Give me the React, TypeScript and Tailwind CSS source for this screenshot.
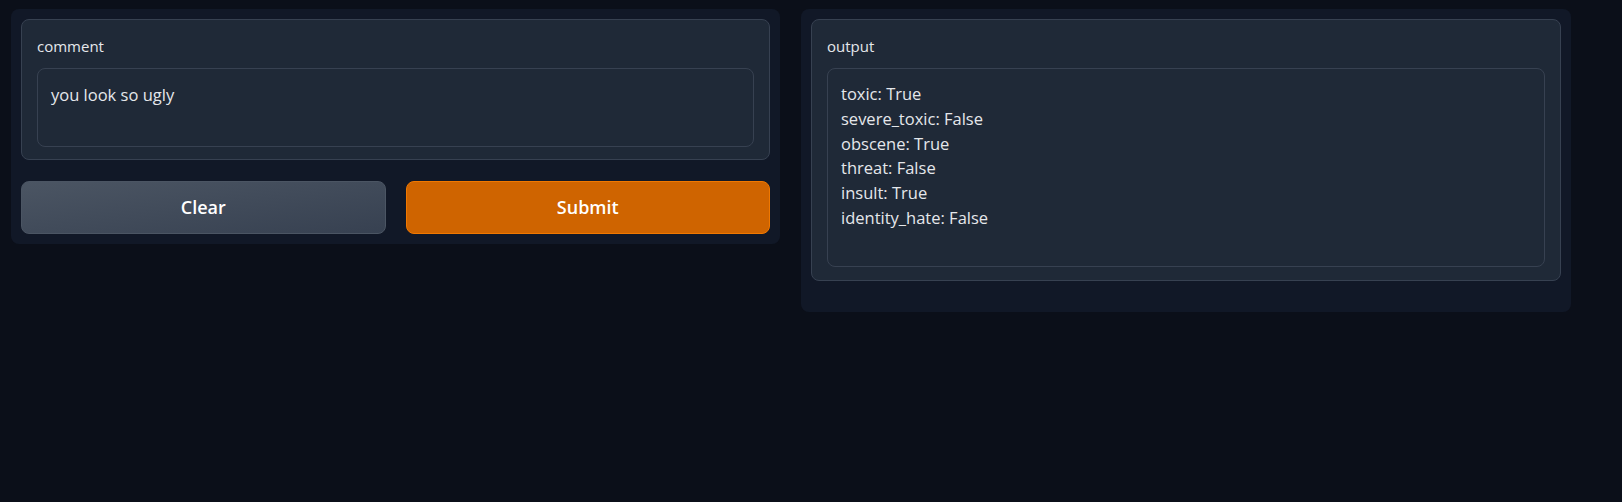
import React from 'react';

const results = [
  'toxic: True',
  'severe_toxic: False',
  'obscene: True',
  'threat: False',
  'insult: True',
  'identity_hate: False',
];

export default function App() {
  return (
    <div className="flex items-start gap-[21px] bg-[#0b0f19] min-h-[502px] pl-[11px] pt-[9px] pr-[51px] font-['Open_Sans',sans-serif] text-[#e5e7eb]">

      {/* Input column */}
      <div className="w-[769px] bg-[#111827] rounded-lg p-[10px] flex flex-col gap-[21px]">
        <div className="border border-[#374151] bg-[#1f2937] rounded-lg px-[15px] pt-[16px] pb-[12px] flex flex-col gap-3">
          <div className="text-[15px] leading-5 text-[#e5e7eb]">comment</div>
          <div className="h-[79px] border border-[#374151] rounded-lg px-[13px] pt-[14px] text-[16.5px] leading-6 text-[#e5e7eb]">
            you look so ugly
          </div>
        </div>

        <div className="grid grid-cols-2 gap-5">
          <button className="h-[53px] rounded-lg border border-[#4b5563] bg-gradient-to-br from-[#4b5563] to-[#374151] text-white text-[18px] font-semibold">
            Clear
          </button>
          <button className="h-[53px] rounded-lg border border-[#f07800] bg-[#cf6400] text-white text-[18px] font-semibold">
            Submit
          </button>
        </div>
      </div>

      {/* Output column */}
      <div className="w-[770px] bg-[#111827] rounded-lg px-[10px] pt-[10px] pb-[31px]">
        <div className="border border-[#374151] bg-[#1f2937] rounded-lg px-[15px] pt-[16px] pb-[13px] flex flex-col gap-3">
          <div className="text-[15px] leading-5">output</div>
          <div className="h-[199px] border border-[#374151] rounded-lg px-[13px] pt-[13px] text-[16.5px] leading-[24.8px]">
            {results.map((line) => (
              <div key={line}>{line}</div>
            ))}
          </div>
        </div>
      </div>
    </div>
  );
}
